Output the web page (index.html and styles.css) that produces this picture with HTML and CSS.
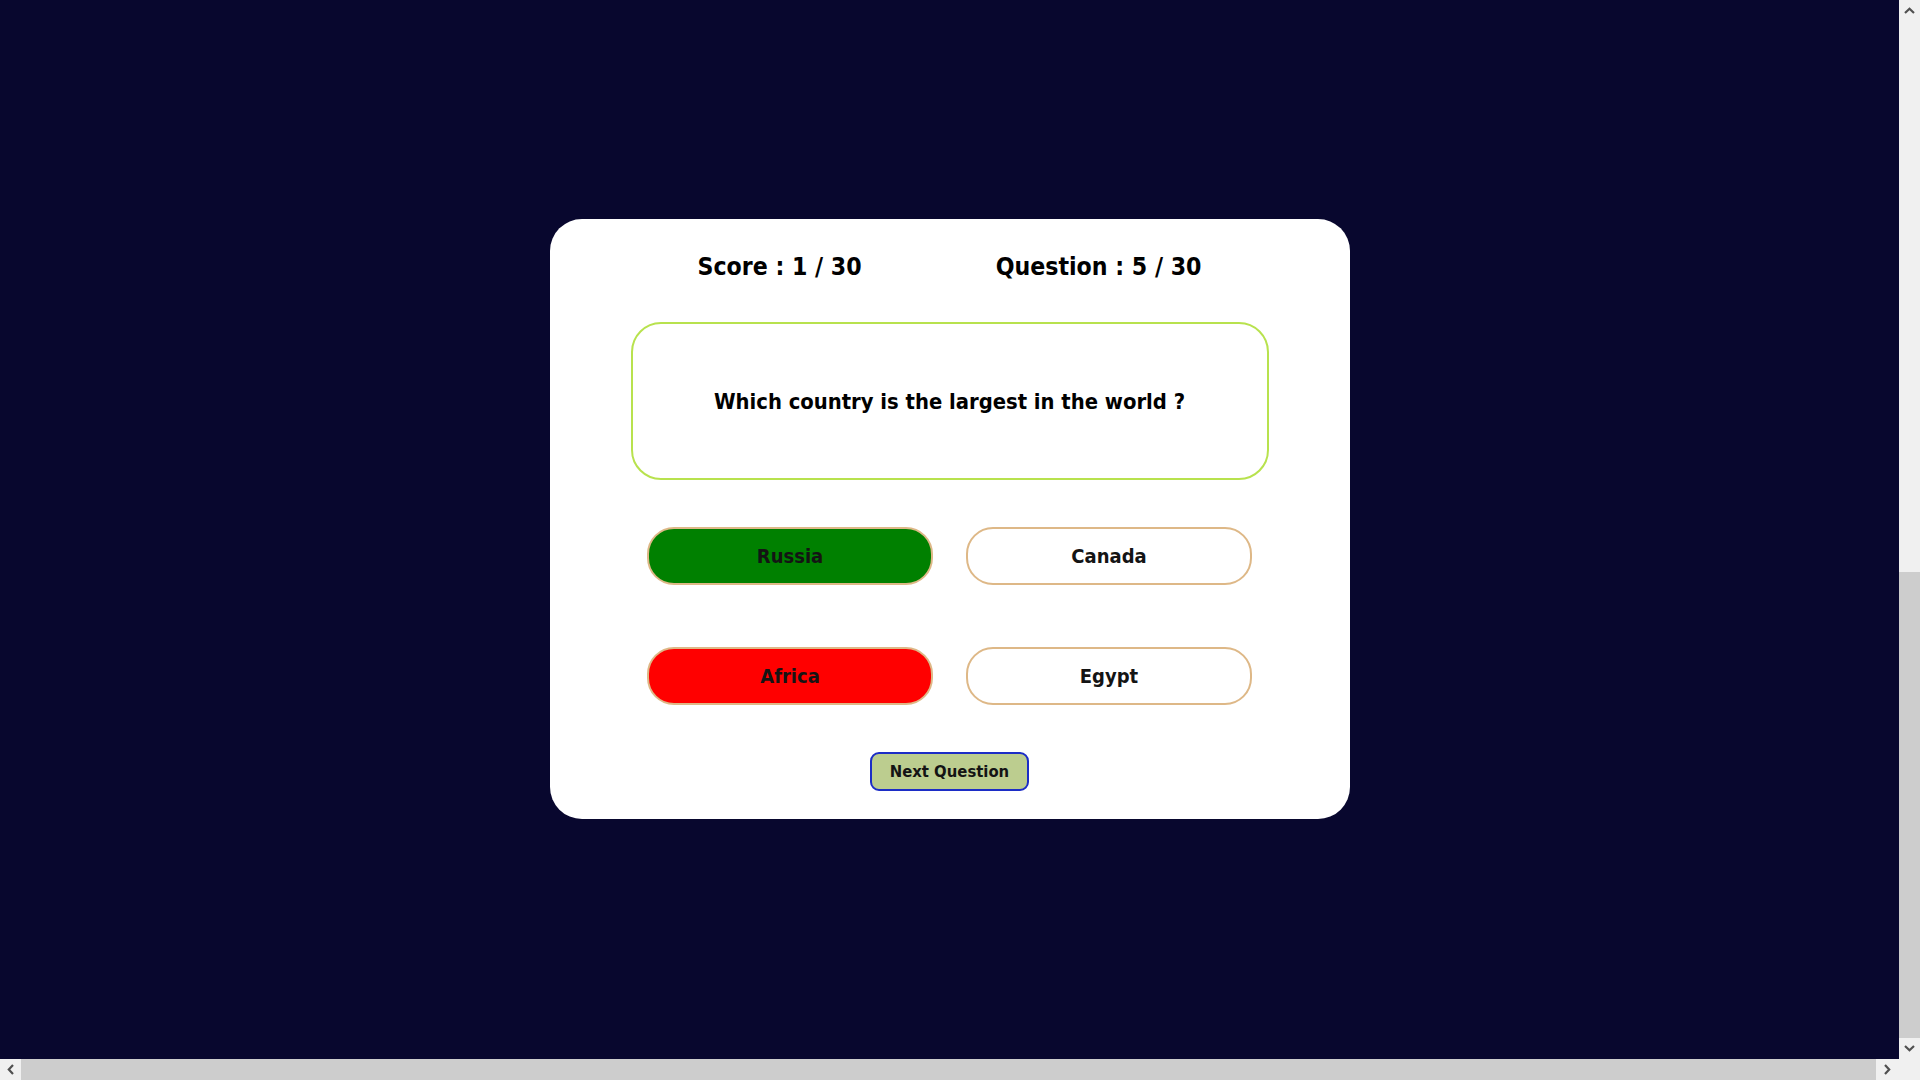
FILE: index.html
```html
<!DOCTYPE html>
<html lang="en">
<head>
<meta charset="utf-8">
<title>Quiz</title>
<link rel="stylesheet" href="styles.css">
</head>
<body>
<div class="viewport">
  <main class="stage">
    <section class="card">
      <header class="status">
        <span class="status-item">Score : 1 / 30</span>
        <span class="status-item">Question : 5 / 30</span>
      </header>
      <div class="question-box">
        <p class="question">Which country is the largest in the world ?</p>
      </div>
      <div class="options">
        <button class="option option-correct">Russia</button>
        <button class="option">Canada</button>
        <button class="option option-wrong">Africa</button>
        <button class="option">Egypt</button>
      </div>
      <div class="actions">
        <button class="next">Next Question</button>
      </div>
    </section>
  </main>

  <div class="vscroll">
    <div class="sb-btn">
      <svg width="11" height="7" viewBox="0 0 11 7"><polyline points="1,6 5.5,1.8 10,6" fill="none" stroke="#505050" stroke-width="2.2"/></svg>
    </div>
    <div class="vtrack"><div class="vthumb"></div></div>
    <div class="sb-btn">
      <svg width="11" height="7" viewBox="0 0 11 7"><polyline points="1,1 5.5,5.2 10,1" fill="none" stroke="#505050" stroke-width="2.2"/></svg>
    </div>
  </div>

  <div class="hscroll">
    <div class="sb-btn">
      <svg width="7" height="11" viewBox="0 0 7 11"><polyline points="6,1 1.8,5.5 6,10" fill="none" stroke="#505050" stroke-width="2.2"/></svg>
    </div>
    <div class="hthumb"></div>
    <div class="sb-btn sb-btn-wide">
      <svg width="7" height="11" viewBox="0 0 7 11"><polyline points="1,1 5.2,5.5 1,10" fill="none" stroke="#505050" stroke-width="2.2"/></svg>
    </div>
  </div>

  <div class="corner"></div>
</div>
</body>
</html>
```

FILE: styles.css
```css
html, body {
  margin: 0;
  padding: 0;
  height: 100%;
  overflow: hidden;
}

body {
  background: #08072e;
  font-family: "DejaVu Sans Condensed", "DejaVu Sans", sans-serif;
  font-stretch: condensed;
  font-weight: bold;
}

.viewport {
  height: 100vh;
  display: grid;
  grid-template-columns: 1fr 21px;
  grid-template-rows: 1fr 21px;
}

/* ---------- page content ---------- */
.stage {
  min-width: 0;
  min-height: 0;
  overflow: hidden;
  box-sizing: border-box;
  padding-top: 219px;
  display: flex;
  justify-content: center;
  align-items: flex-start;
}

.card {
  width: 800px;
  height: 600px;
  box-sizing: border-box;
  background: #ffffff;
  border-radius: 32px;
  padding: 30px 81px 28px;
  display: flex;
  flex-direction: column;
}

.status {
  display: flex;
  justify-content: space-around;
  height: 36px;
  line-height: 36px;
  font-size: 24.6px;
  color: #000;
}

.question-box {
  margin-top: 37px;
  height: 158px;
  box-sizing: border-box;
  border: 2px solid #b8e24e;
  border-radius: 30px;
  display: flex;
  align-items: center;
  justify-content: center;
}

.question {
  margin: 0;
  font-size: 21.8px;
  color: #000;
}

.options {
  margin-top: 47px;
  display: grid;
  grid-template-columns: 286px 286px;
  column-gap: 33px;
  row-gap: 62px;
  justify-content: center;
}

.option {
  height: 58px;
  box-sizing: border-box;
  border: 2px solid #deb887;
  border-radius: 27px;
  background: #ffffff;
  color: #141414;
  font-family: inherit;
  font-stretch: condensed;
  font-weight: bold;
  font-size: 20px;
  padding: 0;
}

.option-correct {
  background: #008000;
}

.option-wrong {
  background: #ff0000;
}

.actions {
  margin-top: 47px;
  display: flex;
  justify-content: center;
}

.next {
  width: 159px;
  height: 39px;
  box-sizing: border-box;
  background: #bccd8f;
  border: 2px solid #1c2dc6;
  border-radius: 9px;
  color: #141414;
  font-family: inherit;
  font-stretch: condensed;
  font-weight: bold;
  font-size: 16.5px;
  padding: 0;
}

/* ---------- window scrollbars ---------- */
.vscroll {
  background: #f0f0f0;
  display: flex;
  flex-direction: column;
}

.vtrack {
  flex: 1;
  display: flex;
  flex-direction: column;
  justify-content: flex-end;
}

.vthumb {
  height: 466px;
  background: #cdcdcd;
}

.hscroll {
  background: #f0f0f0;
  display: flex;
}

.hthumb {
  flex: 1;
  background: #cdcdcd;
}

.sb-btn {
  width: 21px;
  height: 21px;
  flex: none;
  display: flex;
  align-items: center;
  justify-content: center;
}

.sb-btn-wide {
  width: 23px;
}

.corner {
  background: #f0f0f0;
}
```
